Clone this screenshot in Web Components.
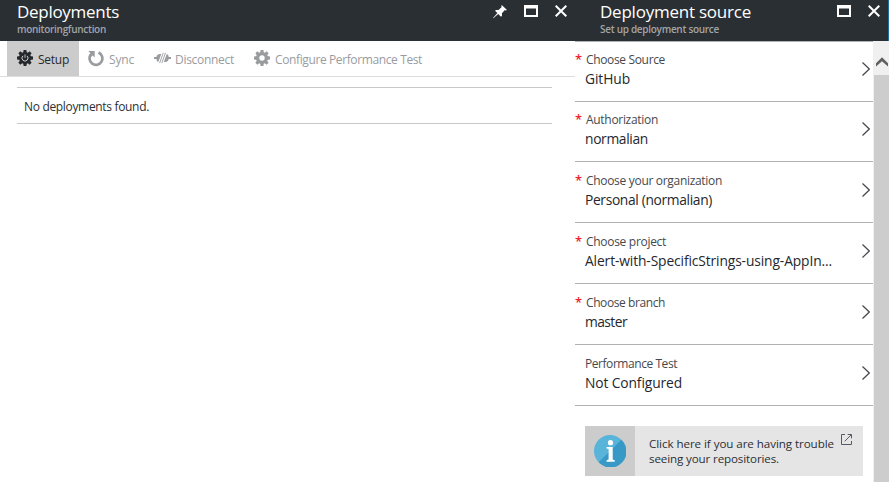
<!DOCTYPE html>
<html lang="en"><head><meta charset="utf-8"><title>Deployments</title>
<style>
html,body{margin:0;height:100%;overflow:hidden;background:#fff}
body{font-family:"Open Sans","Noto Sans",sans-serif;color:#2b2f35}
</style></head><body>
<portal-page></portal-page>
<script>
const define=(name,html,setup)=>customElements.define(name,class extends HTMLElement{
  connectedCallback(){
    if(this.shadowRoot)return;
    const t=document.createElement('template');t.innerHTML=html;
    this.attachShadow({mode:'open'}).append(t.content.cloneNode(true));
    if(setup)setup(this,this.shadowRoot);
  }
});

// One line of text whose tracking is adjusted to an advance width.
define('fit-text',`<style>:host{display:block;white-space:nowrap}span{display:inline-block}</style><span></span>`,(el,root)=>{
  const s=root.querySelector('span');s.textContent=el.getAttribute('text');
  const w=parseFloat(el.getAttribute('w')),n=s.textContent.length;
  if(w)requestAnimationFrame(()=>{s.style.letterSpacing=((w-s.getBoundingClientRect().width)/n).toFixed(3)+'px'});
});

const gear=(hub)=>{
  let teeth='';
  for(let i=0;i<8;i++)teeth+=`<path d="M6.6 0h2.8l.5 3.4H6.1z" transform="rotate(${i*45} 8 8)"/>`;
  return `<g fill="currentColor">${teeth}</g><circle cx="8" cy="8" r="4.4" fill="none" stroke="currentColor" stroke-width="3.4"/>${hub}`;
};
const icons={
  setup:[16,16,gear('<circle cx="8" cy="8" r="3.5" fill="currentColor"/><path d="M5.9 5.9a3 3 0 1 0 4.2 0" fill="none" stroke="#ccc" stroke-width="1"/><path d="M8 4.4v3.4" stroke="#ccc" stroke-width=".9"/>')],
  gear:[16,16,gear('')],
  sync:[16,17,'<path d="M10.5 2.6A6.4 6.4 0 1 1 3.2 4.2" fill="none" stroke="currentColor" stroke-width="2.7"/><path d="M.3 1.1h6.4v6.3L4.7 5.5 3 7 1 5l1.5-1.7z" fill="currentColor"/>'],
  disconnect:[17,12,'<path d="M0 5h2.4C2.8 3 4 2 6 2h1.3L4.3 10C3 9.6 2.6 8.5 2.4 7H0zM9.8 10l3-8c1.2.4 1.8 1.4 1.9 3H17v2h-2.3c-.3 2-1.5 3-3.5 3z" fill="currentColor"/><path d="M9.3.8 5.6 11.1M11.5.8 7.8 11.1" stroke="currentColor" stroke-width=".9"/>'],
  pin:[14,14,'<path d="M8.8 0 14 5.1 12.7 5.6 11.9 5.1 8.9 8.2 9 10.8 8 11.7 5.2 9 .4 13.3 0 13 4.4 8.1 2 5.7 3.1 4.9 5.5 5 8.7 2 8.3 1.1z" fill="currentColor"/>'],
  max:[14,12,'<path d="M0 0h14v12H0zM2 3.5v6.5h10V3.5z" fill="currentColor" fill-rule="evenodd"/>'],
  close:[12,12,'<path d="M.7.7 11.3 11.3M11.3.7.7 11.3" stroke="currentColor" stroke-width="2" fill="none"/>'],
  chevron:[8,14,'<path d="M.5.5 7.3 7 .5 13.5" stroke="currentColor" stroke-width="1.2" fill="none"/>'],
  up:[12,10,'<path d="M0 6.3 6 .2 12 6.3V9.4L6 4.2 0 9.4z" fill="currentColor"/>'],
  external:[11,11,'<path d="M4 .5H.5v10h10V7M6.7.5h3.8v3.8M10.2.8 3.7 7.3" stroke="currentColor" stroke-width="1" fill="none"/>'],
  info:[32,32,'<circle cx="16" cy="16" r="16" fill="#59b4d9"/><path d="M27.3 4.7A16 16 0 1 1 4.7 27.3z" fill="#3999c6"/><circle cx="16.5" cy="7.7" r="2.6" fill="#fff"/><path d="M12.5 12h6.2v12.6l2 .7v1.5h-8.1v-1.5l2-.7V14l-2.1-.6z" fill="#fff"/>']
};
define('ui-icon',`<style>:host{display:block;flex:none}svg{display:block}</style><div></div>`,(el,root)=>{
  const [w,h,body]=icons[el.getAttribute('name')];
  root.querySelector('div').innerHTML=`<svg width="${w}" height="${h}" viewBox="0 0 ${w} ${h}">${body}</svg>`;
});

define('blade-header',`<style>
:host{display:flex;justify-content:space-between;box-sizing:border-box;height:41px;background:#2a2f33;color:#fff;padding-left:var(--inset,17px)}
.t{font-size:17px;line-height:22px;margin-top:1px}.s{font-size:10px;line-height:12px;font-weight:600;color:#a2a5a8}
.a{display:flex;gap:17px;padding:5px var(--end,8px) 0 0;align-items:flex-start}</style>
<div><div class="t"><slot name="title"></slot></div><div class="s"><slot name="sub"></slot></div></div><div class="a"><slot></slot></div>`);

define('tool-button',`<style>
:host{display:flex;align-items:center;box-sizing:border-box;height:35px;color:#999c9f;font-size:12px;line-height:17px}
:host([active]){background:#ccc;color:#25292e}
.i{margin-right:var(--gap,5px);padding-bottom:1px}.x{padding-top:1px}</style><div class="i"><slot name="icon"></slot></div><div class="x"><slot></slot></div>`);

define('source-row',`<style>
:host{display:flex;justify-content:space-between;box-sizing:border-box;height:var(--h,61px);border-bottom:1px solid #b0b1b3;padding-top:var(--top,9px)}
.b{display:grid;grid-template-columns:10px auto;grid-template-rows:18px 20px}
.star{color:#f01f2c;font-size:13px;font-weight:600;line-height:16px;height:16px}
.l{font-size:12px;line-height:18px;color:#45494e;padding-left:var(--label,1px)}
.v{grid-column:2;font-size:13.8px;line-height:20px;color:#24282e}
.c{padding:11px 3px 0 0;color:#43474c}</style>
<div class="b"><div class="star"></div><div class="l"><slot name="label"></slot></div><div class="v"><slot></slot></div></div><div class="c"><ui-icon name="chevron"></ui-icon></div>`,(el,root)=>{
  if(el.hasAttribute('required'))root.querySelector('.star').textContent='*';
});

define('info-box',`<style>
:host{display:flex;width:278px;height:50px;background:#e5e5e5;margin:20px 0 0 10px}
.i{width:50px;display:grid;place-items:center;background:#ccc}
.t{font-size:11.6px;line-height:15px;padding:10px 0 0 14px;width:185px}
.e{padding:8px 0 0 7px;color:#555b66}</style>
<div class="i"><ui-icon name="info"></ui-icon></div><div class="t"><slot></slot></div><div class="e"><ui-icon name="external"></ui-icon></div>`);

define('scroll-bar',`<style>:host{display:flex;flex-direction:column;width:16px;background:#f0f0f0;color:#606060}
.u{height:34px;box-sizing:border-box;padding:16px 0 0 3px}.th{flex:1;background:#cdcdcd;margin-left:1px}</style><div class="u"><ui-icon name="up"></ui-icon></div><div class="th"></div>`);

define('portal-page',`<style>
:host{display:grid;grid-template-columns:575px 314px;width:889px;height:482px;overflow:hidden}
.tools{display:flex;padding-left:7px;height:35px;border-bottom:1px solid #ddd}
.set{width:72px;padding-left:10px}.sync{margin-left:9px}.dis{margin-left:20px;--gap:4px}.cfg{margin-left:20px}
.empty{margin:10px 23px 0 17px;border:solid #c9c9c9;border-width:1px 0;height:34px;padding:1px 0 0 7px;font-size:12px;line-height:35px}
.right{display:flex;flex-direction:column}.right blade-header{--inset:25px;--end:8px;border-right:1px solid #1c6fa0}
.body{display:flex;flex:1}.list{width:298px;box-sizing:border-box;border-top:1px solid #b0b1b3}
</style>
<section>
<blade-header><fit-text slot="title" text="Deployments" w="102"></fit-text><fit-text slot="sub" text="monitoringfunction" w="89"></fit-text><ui-icon name="pin"></ui-icon><ui-icon name="max"></ui-icon><ui-icon name="close"></ui-icon></blade-header>
<div class="tools">
<tool-button class="set" active><ui-icon slot="icon" name="setup"></ui-icon><fit-text text="Setup" w="31"></fit-text></tool-button>
<tool-button class="sync"><ui-icon slot="icon" name="sync"></ui-icon><fit-text text="Sync" w="25"></fit-text></tool-button>
<tool-button class="dis"><ui-icon slot="icon" name="disconnect"></ui-icon><fit-text text="Disconnect" w="59"></fit-text></tool-button>
<tool-button class="cfg"><ui-icon slot="icon" name="gear"></ui-icon><fit-text text="Configure Performance Test" w="147"></fit-text></tool-button>
</div>
<div class="empty"><fit-text text="No deployments found." w="125"></fit-text></div>
</section>
<section class="right">
<blade-header><fit-text slot="title" text="Deployment source" w="151"></fit-text><fit-text slot="sub" text="Set up deployment source" w="119"></fit-text><ui-icon name="max"></ui-icon><ui-icon name="close"></ui-icon></blade-header>
<div class="body"><div class="list">
<source-row required style="--h:60px"><fit-text slot="label" text="Choose Source" w="79"></fit-text><fit-text text="GitHub" w="45"></fit-text></source-row>
<source-row required style="--h:60px"><fit-text slot="label" text="Authorization" w="72"></fit-text><fit-text text="normalian" w="63"></fit-text></source-row>
<source-row required style="--top:10px"><fit-text slot="label" text="Choose your organization" w="136"></fit-text><fit-text text="Personal (normalian)" w="127"></fit-text></source-row>
<source-row required style="--top:10px"><fit-text slot="label" text="Choose project" w="80"></fit-text><fit-text text="Alert-with-SpecificStrings-using-AppIn..." w="247"></fit-text></source-row>
<source-row required style="--top:10px"><fit-text slot="label" text="Choose branch" w="79"></fit-text><fit-text text="master" w="42"></fit-text></source-row>
<source-row style="--top:10px;--label:0px"><fit-text slot="label" text="Performance Test" w="92"></fit-text><fit-text text="Not Configured" w="97"></fit-text></source-row>
<info-box><fit-text text="Click here if you are having trouble" w="185"></fit-text><fit-text text="seeing your repositories." w="130"></fit-text></info-box>
</div><scroll-bar></scroll-bar></div>
</section>`);
</script>
</body></html>
